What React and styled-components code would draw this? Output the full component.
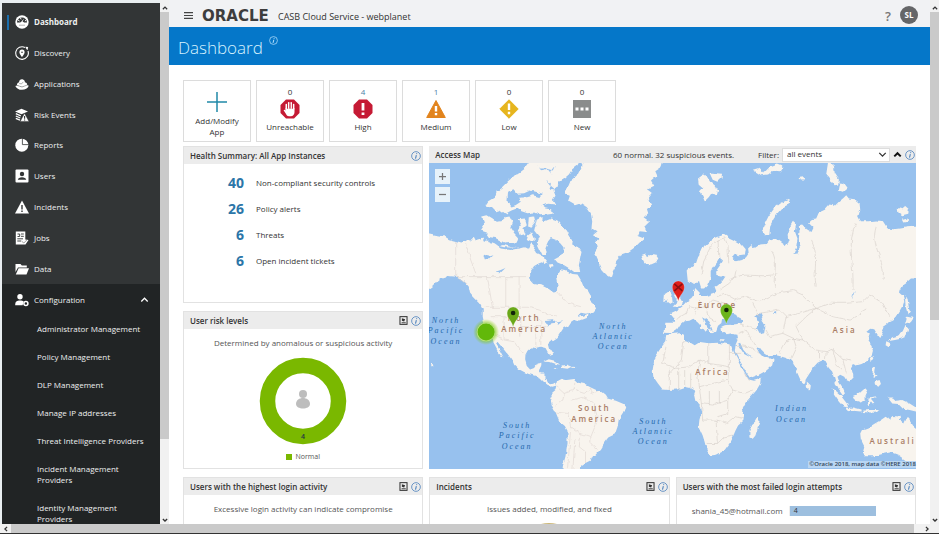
import React from "react";
import styled, { createGlobalStyle, css } from "styled-components";

const Global = createGlobalStyle`
  * { box-sizing: border-box; }
  body { margin: 0; background: #fff; color: #333; font-family: "Open Sans", "Noto Sans", sans-serif; font-size: 8px; line-height: 12px; }
  button, select { font: inherit; color: inherit; }
  ul, h1, h2, p, dl, dd { margin: 0; padding: 0; }
  ul { list-style: none; }
  a { color: inherit; text-decoration: none; }
  svg { display: block; }
`;

/* ---------- frame ---------- */
const Frame = styled.div`
  height: 100vh;
  display: grid;
  grid-template-rows: minmax(0, 1fr) 9px;
  border-bottom: 1px solid #333;
  overflow: hidden;
`;
const Body = styled.div`
  display: grid;
  grid-template-columns: 158px 9px minmax(0, 1fr) 9px;
  padding-left: 2px;
  background: #e9eef1;
  min-height: 0;
`;
const Track = styled.div`
  display: flex;
  flex-direction: column;
  justify-content: space-between;
  background: #f1f1f1;
  padding-top: 3px;
  min-height: 0;
`;
const Thumb = styled.div`
  height: ${(p) => p.$size};
  background: #cacaca;
`;
const Fill = styled.div`
  flex: 1;
`;
const Arrow = styled.button`
  width: 9px;
  height: 9px;
  padding: 0;
  border: 0;
  display: grid;
  place-items: center;
  background: #f1f1f1;
`;
const BottomTrack = styled.div`
  display: flex;
  background: #cacaca;
  justify-content: space-between;
  & > :first-child { width: 11px; }
  & > :last-child { width: 25px; }
`;

/* ---------- sidebar ---------- */
const Sidebar = styled.nav`
  margin-top: 3px;
  background: #323536;
  color: #eef0f0;
  overflow: hidden;
`;
const NavList = styled.ul`
  display: grid;
  grid-template-rows: repeat(9, 1fr);
  height: 281px;
  padding-top: 4px;
`;
const rowStyle = css`
  display: grid;
  grid-template-columns: 14px 1fr auto;
  column-gap: 5px;
  align-items: center;
  width: 100%;
  padding: 0 11px 0 13px;
`;
const NavLink = styled.a`
  ${rowStyle}
  position: relative;
  height: 100%;
  font-weight: ${(p) => (p.$active ? 700 : 400)};
  &::before {
    content: "";
    position: absolute;
    left: 5px;
    top: 8px;
    bottom: 8px;
    width: 2px;
    background: ${(p) => (p.$active ? "#1b6fae" : "transparent")};
  }
`;
const ConfigArea = styled.div`
  background: #212425;
  min-height: 100%;
`;
const ConfigButton = styled.button`
  ${rowStyle}
  height: 31px;
  border: 0;
  background: none;
  text-align: left;
`;
const SubList = styled.ul`
  padding-left: 35px;
  padding-right: 10px;
`;
const SubItem = styled.li`
  max-width: ${(p) => (p.$wrap ? "90px" : "none")};
  padding: 8px 0 9px;
  line-height: 11px;
`;

/* ---------- header ---------- */
const Main = styled.main`
  background: #fff;
  overflow: hidden;
  display: flex;
  flex-direction: column;
`;
const TopBar = styled.header`
  flex: none;
  display: flex;
  align-items: center;
  height: 27px;
  padding: 4px 12px 0 15px;
  background: #f1f2f4;
`;
const IconButton = styled.button`
  display: grid;
  place-items: center;
  border: 0;
  padding: 0;
  background: none;
`;
const Brand = styled.span`
  margin-left: 9px;
  width: 76px;
  font: 700 15px/18px "DejaVu Sans", sans-serif;
  color: #3d3d3d;
  white-space: nowrap;
`;
const Service = styled.span`
  flex: 1;
  font-size: 9px;
  padding-top: 2px;
`;
const Help = styled(IconButton)`
  font-size: 13px;
  font-weight: 600;
  color: #777;
  width: 12px;
`;
const Avatar = styled.button`
  margin-left: 6px;
  margin-bottom: 2px;
  width: 18px;
  height: 18px;
  padding: 0;
  border: 0;
  border-radius: 50%;
  background: #656668;
  color: #fff;
  font-size: 8px;
  font-weight: 700;
`;
const Banner = styled.div`
  flex: none;
  display: flex;
  align-items: center;
  gap: 6px;
  height: 38px;
  padding-left: 9px;
  background: #0577c9;
  color: #d8f3ff;
  & > button { margin-bottom: 12px; }
`;
const Title = styled.h1`
  font-size: 17px;
  line-height: 24px;
  font-weight: 300;
  padding-top: 3px;
`;

/* ---------- tiles ---------- */
const Content = styled.div`
  padding: 15px 14px 0;
`;
const Tiles = styled.div`
  display: flex;
  gap: 5px;
  margin-bottom: 4px;
`;
const Tile = styled.button`
  display: flex;
  flex-direction: column;
  align-items: center;
  width: 68px;
  height: 62px;
  padding: ${(p) => (p.$add ? "10px 8px 0" : "5px 0 0")};
  border: 1px solid #dcdcdc;
  background: #fff;
  line-height: 11px;
  & > svg { margin-bottom: 2px; }
`;
const Count = styled.span`
  margin-bottom: 2px;
  color: ${(p) => (p.$link ? "#4c82a8" : "#333")};
`;

/* ---------- panels ---------- */
const Grid = styled.div`
  display: grid;
  grid-template-columns: repeat(3, minmax(0, 1fr));
  grid-template-rows: 157px 158px auto;
  gap: 8px 6px;
`;
const Panel = styled.section`
  display: flex;
  flex-direction: column;
  border: 1px solid #e2e2e2;
  background: #fff;
  min-width: 0;
  ${(p) => p.$wide && "grid-column: 2 / 4; grid-row: 1 / 3; border: 0;"}
`;
const PanelHead = styled.div`
  flex: none;
  display: flex;
  align-items: center;
  gap: 3px;
  height: 17px;
  padding: 0 1px 0 6px;
  background: #ececec;
`;
const PanelTitle = styled.h2`
  flex: 1;
  font-size: 8px;
  line-height: 12px;
  font-weight: 600;
  white-space: nowrap;
`;
const Summary = styled.dl`
  display: grid;
  grid-template-columns: 60px 1fr;
  grid-auto-rows: 26px;
  column-gap: 12px;
  align-items: center;
  padding-top: 6px;
`;
const Figure = styled.dt`
  text-align: right;
  font-size: 14px;
  font-weight: 700;
  color: #2c76a8;
`;
const Note = styled.p`
  padding: 8px 0;
  text-align: center;
  font-size: 8px;
  line-height: 12px;
  color: #555;
`;
const Center = styled.div`
  display: flex;
  flex-direction: column;
  align-items: center;
  gap: 6px;
`;
const Legend = styled.div`
  display: flex;
  align-items: center;
  gap: 3px;
  font-size: 7px;
  color: #555;
  &::before { content: ""; width: 6px; height: 6px; background: #7ab800; }
`;
const MapNote = styled.span`
  margin-right: 21px;
  font-size: 8px;
`;
const Select = styled.select`
  width: 108px;
  height: 14px;
  padding: 0 4px 3px;
  appearance: none;
  border: 1px solid #ddd;
  background: #fff;
  line-height: 9px;
`;
const SelectWrap = styled.span`
  display: grid;
  align-items: center;
  & > * { grid-area: 1 / 1; }
  & > svg { justify-self: end; margin-right: 3px; pointer-events: none; }
`;
const MapBox = styled.div`
  flex: 1;
  position: relative;
  min-height: 0;
  & > svg { width: 100%; height: 100%; }
`;
const Zoom = styled.div`
  position: absolute;
  left: 6px;
  top: 6px;
  display: grid;
  gap: 3px;
`;
const ZoomButton = styled.button`
  width: 15px;
  height: 15px;
  padding: 0;
  border: 0;
  background: #e6f2fa;
  color: #666;
  display: grid;
  place-items: center;
`;
const Credit = styled.small`
  position: absolute;
  right: 0;
  bottom: 1px;
  padding-left: 1px;
  background: #b9d6f3;
  color: #33475b;
  font-size: 6px;
  line-height: 7px;
  font-weight: 600;
`;
const BarRow = styled.div`
  display: grid;
  grid-template-columns: 106px 1fr;
  column-gap: 6px;
  align-items: center;
  padding-top: 10px;
  font-size: 8px;
  & > :first-child { text-align: right; color: #555; }
`;
const BarArea = styled.div`
  border-left: 1px solid #eee;
`;
const Bar = styled.div`
  width: 69%;
  height: 10px;
  padding-left: 4px;
  background: #9dbfdf;
  font-size: 7px;
  line-height: 10px;
`;

/* ---------- icons ---------- */
const Svg = ({ s = 14, children, ...r }) => (
  <svg width={s} height={s} viewBox="0 0 14 14" fill="none" aria-hidden="true" {...r}>{children}</svg>
);
const W = "#fff";
const D = "#323536";
const navIcons = {
  Dashboard: (
    <Svg><circle cx="7" cy="7" r="6.7" fill={W} /><path d="M2 7.6a5 5 0 0 1 10 0H9.2L7.6 6.4 9.3 3.3 6 6.9l-1 .7z" fill={D} /><path d="M3 5l1.6 1M5.4 2.8l.7 1.6M11.2 5.2l-1.3.8" stroke={W} /><path d="M4 10.2h6" stroke="#aaa" strokeWidth=".9" /></Svg>
  ),
  Discovery: (
    <Svg><path d="M10 1.5A6.3 6.3 0 1 0 13 5" stroke={W} strokeWidth="1.1" /><path d="M10.3.8l2.8.3-.4 2.9-1.2-.7z" fill={W} /><path d="M7 3.6a2.6 2.6 0 0 0-2.6 2.6C4.400 8 7 11 7 11s2.600-3 2.600-4.800A2.600 2.600 0 0 0 7 3.600z" fill={W} /><circle cx="7" cy="6.2" r=".8" fill={D} /></Svg>
  ),
  Applications: (
    <Svg><path d="M2 8.3C1.600 6 3.500 5.500 4 5.500 4.200 3 6 1.800 8 2.500c1.200.4 1.900 1.600 1.900 2.700C12 5.400 12.500 7 12 8.400L7 10z" fill={W} /><path d="M.3 8.900l2.200-.7L7 9.700l4.800-1.800 2 .9c-1 2.600-3.600 4-6.800 4S1.300 11.300.3 8.900z" fill={W} /><path d="M1.800 8.300L7 10l5-1.900M4.200 6.500l2.300.4 1.800-2" stroke={D} strokeWidth=".4" /></Svg>
  ),
  "Risk Events": (
    <Svg><path d="M6.500.8L13 3.500 6.500 6.200 0 3.500z" fill={W} /><path d="M.8 5.700l5 2.200M.8 8l4.500 2M.8 10.300l4.200 1.900" stroke={W} strokeWidth="1.300" /><path d="M9.500 5.200L14 13.400H5.200z" fill={W} stroke={D} strokeWidth=".5" /><path d="M9.600 8v2.700M9.600 11.400v1" stroke={D} strokeWidth="1.100" /></Svg>
  ),
  Reports: (
    <Svg><circle cx="6.800" cy="7.200" r="6.500" fill={W} /><path d="M7.400.5v6.100h6.100" stroke={D} strokeWidth=".8" /></Svg>
  ),
  Users: (
    <Svg><rect x=".5" y=".5" width="13" height="13" rx="1" fill={W} /><circle cx="7" cy="5" r="2.200" fill={D} /><path d="M2.800 10.800c0-3.500 8.400-3.500 8.400 0z" fill={D} /></Svg>
  ),
  Incidents: (
    <Svg><path d="M7 .5L14 13.500H0z" fill={W} /><path d="M7 5v4.400M7 10.600v1.500" stroke={D} strokeWidth="1.400" /></Svg>
  ),
  Jobs: (
    <Svg><path d="M.8.5h9.500v8l3.200.5-3 4.500H.8z" fill={W} /><path d="M2.500 3h2.200v2.500H2.500M6 3h2.800M6 5.300h2.800M2.300 7.800H8M2.300 10h4" stroke={D} strokeWidth=".9" /><path d="M7 10.500l1.800 1.500 3.300-3.300" stroke="#888" strokeWidth=".8" /></Svg>
  ),
  Data: (
    <Svg><path d="M.5 2h5l1.300 1.500h5v2H3L.5 10z" fill={W} /><path d="M3.600 6.300H14L11.500 12.500H.8z" fill={W} /></Svg>
  ),
};
const ConfigIcon = () => (
  <Svg><circle cx="5" cy="3.700" r="2.700" fill={W} /><path d="M.2 12.300C0 8.500 2 7.500 5 7.500c1.500 0 2.800.3 3.700 1L7.600 12.300z" fill={W} /><circle cx="10.900" cy="10.600" r="2" stroke={W} strokeWidth="1.500" /></Svg>
);
const Info = ({ color = "#4a80bd", s = 10 }) => (
  <Svg s={s}><circle cx="7" cy="7" r="6.100" stroke={color} strokeWidth="1.100" /><path d="M7.500 5.800L6.300 10.700M8 3.200l-.2 1.200" stroke={color} strokeWidth="1.500" /></Svg>
);
const Export = () => (
  <Svg s={9}><rect x="1.500" y="1" width="11" height="12" stroke="#333" strokeWidth="1.600" /><path d="M4 10.500h6.500" stroke="#333" strokeWidth="1.400" /><path d="M4.500 3.500l5 1.500-1.500 3.500-3.500-1z" fill="#333" /></Svg>
);
const Chevron = ({ up, s = 9, color = "#333", w = 2 }) => (
  <Svg s={s}><path d={up ? "M2 10l5-5 5 5" : "M2 4.500l5 5 5-5"} stroke={color} strokeWidth={w} /></Svg>
);
const InfoButton = (p) => <IconButton aria-label="Information"><Info {...p} /></IconButton>;
const ExportButton = () => <IconButton aria-label="Export"><Export /></IconButton>;

const octagon = "M6 .5h8L19.500 6v8L14 19.500H6L.5 14V6z";
const Big = ({ children }) => <svg width="20" height="20" viewBox="0 0 20 20" aria-hidden="true">{children}</svg>;
const bang = <path d="M10 4v7.500M10 13.500v2.500" stroke="#fff" strokeWidth="2.800" />;
const tiles = [
  { n: 0, label: "Unreachable", icon: <Big><path d={octagon} fill="#c51a34" /><path d="M6.300 10V5.500M8.700 9V3.700M11.200 9V3.700M13.600 10V5.500" stroke="#fff" strokeWidth="1.600" strokeLinecap="round" /><path d="M5.500 9.200h9v4c0 2-1.500 4-3.600 4H9c-1.500 0-2.300-1-3-2.300L3.600 11.300c.4-.9 1.300-.7 1.900.1z" fill="#fff" /><path d="M7.500 5v5M10 4.500V10M12.400 5v5" stroke="#c51a34" strokeWidth=".6" /></Big> },
  { n: 4, link: true, label: "High", icon: <Big><path d={octagon} fill="#c51a34" />{bang}</Big> },
  { n: 1, link: true, label: "Medium", icon: <Big><path d="M10 1.500L19.300 18.500H.7z" fill="#e2841d" stroke="#e2841d" strokeLinejoin="round" /><path d="M10 7v5.500M10 14v2.300" stroke="#fff" strokeWidth="2.400" /></Big> },
  { n: 0, label: "Low", icon: <Big><path d="M10 .8L19.200 10 10 19.200.8 10z" fill="#e6b51e" stroke="#e6b51e" strokeLinejoin="round" /><path d="M10 4.500v6.500M10 12.800v2.400" stroke="#fff" strokeWidth="2.400" /></Big> },
  { n: 0, label: "New", icon: <Big><path d="M1 1h18v18H1z" fill="#8a8c8c" /><path d="M3.500 8.500h3v3h-3zM8.500 8.500h3v3h-3zM13.500 8.500h3v3h-3z" fill="#fff" /></Big> },
];

/* ---------- world map ---------- */
const westLand = [
  "M10 219L40 226 62 230 75 238 95 243 112 248 125 243 133 238 140 245 150 232 156 243 166 240 175 236 180 246 190 238 198 250 210 252 222 260 240 255 262 262 285 266 300 262 312 268 322 250 334 262 330 276 345 284 360 292 362 304 345 310 330 318 318 335 318 358 330 372 352 376 375 388 388 398 398 396 400 375 396 352 402 340 408 330 425 333 445 342 460 344 470 360 478 380 492 394 500 408 497 420 510 432 516 448 508 458 490 462 470 458 458 470 476 468 490 462 488 474 466 482 452 478 440 486 432 498 418 504 408 520 400 532 388 540 374 553 378 568 386 580 380 588 372 578 364 564 348 560 334 564 322 562 310 572 304 584 303 600 308 618 318 628 330 624 338 610 352 608 350 620 342 632 350 640 364 640 364 655 372 668 384 672 396 668 398 676 384 680 370 674 358 664 346 652 330 646 314 642 300 636 282 626 270 614 264 600 248 580 234 562 220 545 216 552 228 572 238 592 232 590 220 572 208 550 206 532 203 515 190 500 180 488 176 470 176 446 168 430 150 412 138 398 134 380 122 366 108 354 90 350 70 348 52 354 40 364 30 376 10 392Z",
  "M398 674L402 662 415 655 428 660 450 657 462 668 480 672 500 682 516 690 530 692 545 704 552 716 575 722 598 732 603 742 596 758 584 776 580 800 572 822 552 832 540 848 528 868 516 882 505 890 500 902 484 910 472 918 466 935 414 935 418 910 424 888 430 850 430 812 422 798 406 784 394 756 384 738 380 722 386 708 384 698 394 690Z",
  "M480 5L470 25 460 45 444 58 436 78 420 92 424 104 440 108 434 126 452 136 470 130 488 142 500 160 504 185 502 204 520 214 506 226 524 236 512 248 522 260 512 275 518 292 526 310 534 330 546 344 560 352 566 334 574 318 576 300 590 284 612 276 632 262 650 244 660 236 640 228 646 214 668 216 660 198 674 184 658 172 672 160 668 148 682 132 670 118 684 100 668 88 690 78 680 62 696 48 690 34 712 20 716 5Z",
  "M320 5L308 22 290 36 268 50 250 66 236 80 218 94 212 112 192 124 184 136 200 144 214 158 232 152 244 162 262 152 278 146 292 154 310 160 330 158 348 166 370 164 386 162 384 148 364 146 352 136 372 132 394 134 386 120 394 108 388 92 400 82 404 66 420 56 434 44 444 28 460 16 466 5Z",
  "M175 170L190 166 206 176 218 186 232 184 244 172 256 170 264 186 258 204 270 222 282 236 276 248 256 246 240 248 226 240 214 234 198 232 188 218 170 212 180 196Z",
  "M280 178L302 176 308 196 298 206 304 222 290 226 284 210 290 196Z M314 172L330 170 334 188 322 204 312 200Z M312 226L324 218 332 236 320 246 308 240Z",
  "M338 180L352 172 362 184 382 176 400 182 412 196 428 212 438 230 446 240 444 254 462 262 472 276 468 296 464 316 468 336 450 336 436 326 420 316 400 308 390 296 404 288 418 280 418 262 408 250 396 240 380 234 372 244 364 262 368 282 352 282 344 266 340 248 346 232 330 212Z",
  "M352 302L362 298 370 310 358 316Z M374 314l12-2 2 10-12 2Z",
  "M652 288L664 284 668 292 680 282 694 284 702 296 694 308 680 314 666 312 658 304Z",
  "M358 605L374 598 392 602 408 614 396 612 378 606Z M412 616L428 614 442 620 430 626 414 624Z M445 620l8 1-1 3-8-1Z M390 622l10 2-3 3-8-2Z",
  "M722 402l12-8 8 10-4 16-18 2Z M20 612l6 0 2 5-5 2Z",
];
const eastLand = [
  "M55 332L66 318 80 310 86 292 96 276 104 258 118 246 132 236 146 230 162 224 178 234 194 242 214 254 226 268 224 284 208 286 196 282 188 290 202 304 218 300 230 292 238 280 236 266 246 256 256 264 272 254 292 252 300 242 320 238 336 250 348 258 358 246 354 222 360 204 370 186 380 194 376 214 384 236 380 262 372 282 384 280 396 258 388 238 390 214 388 196 398 194 412 208 426 216 432 204 416 188 426 178 440 176 448 158 466 150 480 134 496 138 508 126 520 116 530 106 538 116 556 118 570 130 572 150 566 170 574 184 600 184 620 182 640 184 654 206 672 208 690 206 712 202 745 200 745 356 724 356 712 366 698 376 690 390 688 398 700 408 704 424 698 442 690 456 680 472 672 478 660 484 652 492 640 500 634 508 640 520 632 534 624 524 614 508 602 506 590 516 604 522 600 534 596 546 606 558 610 572 606 588 594 602 576 612 560 616 550 612 544 622 550 640 552 652 540 664 530 660 524 650 512 644 504 650 510 668 518 680 526 700 520 706 508 690 500 674 494 652 488 634 478 624 468 606 456 602 444 608 430 624 420 640 410 656 406 672 394 662 386 644 378 626 372 608 364 600 350 594 330 588 312 584 300 586 288 578 276 566 260 562 270 580 280 590 296 592 312 600 308 616 290 632 268 644 242 654 232 640 220 618 208 596 196 574 198 556 206 536 204 524 190 522 172 526 158 516 156 500 166 496 184 494 204 492 214 482 200 478 186 468 170 472 158 480 156 492 146 500 140 516 130 512 124 496 116 484 106 476 98 472 108 492 120 506 110 516 100 504 86 488 72 476 60 482 46 484 34 494 24 510 10 520 -14 518 -12 488 18 488 14 472 4 460 20 452 38 440 52 424 66 414 74 404 74 392 80 384 90 394 92 408 112 408 132 402 142 396 136 382 146 376 160 362 168 350 152 350 140 344 142 330 152 316 160 304 150 296 144 306 134 320 124 336 124 354 116 374 104 386 92 386 86 366 74 372 58 362Z",
  "M-10 526L10 522 34 520 44 524 44 540 60 546 76 556 92 546 118 550 146 548 176 552 186 556 192 574 204 596 216 620 226 638 238 658 254 662 274 656 272 672 260 692 244 710 228 728 220 744 224 764 222 782 206 796 198 812 192 826 180 850 164 872 142 884 122 886 112 870 106 846 100 826 88 800 90 780 96 758 92 738 78 722 74 704 78 692 64 684 46 680 22 688 0 690 -20 688 -34 670 -48 650 -50 630 -46 606 -40 586 -24 562 -12 546Z",
  "M264 772L270 784 266 800 258 826 250 836 240 832 240 814 248 792 256 786Z",
  "M10 440L20 430 22 416 14 402 24 396 30 410 40 428 36 438 22 440Z M-4 416L8 410 10 428 0 434-8 428Z",
  "M86 56L102 44 114 52 122 66 136 76 146 92 142 108 128 98 118 112 106 124 100 110 92 94 102 84 88 72Z M120 38L140 40 158 42 156 54 144 66 130 60Z",
  "M250 30L270 24 284 38 300 22 322 14 342 22 334 34 312 32 296 44 276 46Z M390 54l12-2 2 10-10 0Z",
  "M476 5L492 16 496 38 508 56 506 74 492 76 482 60 470 44Z M512 68L524 70 534 84 520 96 508 92Z",
  "M356 120L362 132 340 142 324 160 312 178 302 198 300 222 288 226 278 212 286 192 298 168 314 146 334 130Z",
  "M684 144L700 148 706 138 718 148 716 162 698 166 686 158Z M700 180l14-4 2 10-12 2Z",
  "M706 408L714 420 718 444 724 456 714 460 708 440Z M712 470L732 474 724 486 706 492Z M708 494L716 508 708 530 694 536 676 540 654 544 668 532 690 526 700 512Z M650 544L660 548 658 562 648 556Z",
  "M604 594l8-6 2 12-8 6Z M606 622L616 620 614 638 624 648 616 650 606 638Z M614 668L630 660 634 672 624 682Z",
  "M412 664L424 676 422 688 412 682Z",
  "M486 684L500 696 518 712 532 730 536 742 522 738 508 722 494 702Z M532 744L552 742 576 748 576 754 554 752 534 750Z M580 752l20-2 30 0-16 8-34-2Z",
  "M550 708L566 700 584 684 596 690 588 706 588 720 574 730 558 724Z M598 712L620 708 604 716 614 728 610 734 602 724 600 738 594 730Z",
  "M654 712L670 712 680 722 698 720 720 730 745 746 745 756 720 750 700 746 686 732 668 730Z",
  "M572 820L578 808 600 800 616 790 634 780 648 770 660 778 672 768 690 770 692 782 704 790 714 768 722 782 730 796 745 808 745 910 720 908 702 896 684 884 664 876 636 882 612 888 590 888 580 874 584 858 574 838Z",
  "M120 510l12 2-6 8-8-4Z M92 494l6 0 0 14-6-2Z M150 538l16 0-4 5-10-2Z M200 536l12-4-6 8Z",
];
const water = [
  "M252 96L268 88 280 102 300 100 318 92 340 98 356 102 348 112 326 106 306 112 282 114 290 126 274 136 262 140 250 124Z",
  "M338 10L352 34 372 30 386 48 378 36 392 18 386 32 366 26 348 26Z M366 60L380 70 376 86 394 90 380 78Z",
  "M178 284L196 290 208 286 196 298 182 298Z M212 336L230 330 244 324 228 340Z",
  "M216 256L240 262 290 264 260 270 230 266Z M266 180L280 190 280 218 270 210Z",
  "M360 480L386 478 398 488 382 490 374 500 368 490Z M396 488l18-4-12 10Z",
];
const eastWater = [
  "M258 466L276 458 282 472 276 482 288 498 284 520 272 522 262 504 266 488Z",
  "M166 478L178 460 200 464 206 474 222 482 216 490 190 488 170 494Z",
  "M548 416L556 392 550 402Z M310 460l10-4 0 10Z",
  "M204 552L212 548 222 570 236 586 252 594 240 590 224 582Z",
];
const borders = [
  "M95 243V348L130 372M95 350H318M180 442H312L345 450 372 465 400 468M125 250L140 300 155 340M190 350L205 442M245 350V442M285 350V440M400 395L430 430 470 440",
  "M205 520L240 540 270 545 290 575 304 582M200 470H290V530M240 470V540M335 500V560M290 500H370M350 480V555",
  "M398 680L420 700 416 720 394 738M420 700L450 690 452 665M450 690L480 700 500 684M500 684V700L525 692M394 756L430 760 440 800 470 820 500 830 500 850 520 868M440 800L436 850 430 930M470 820L465 860 484 875 484 910M452 840L446 930",
  "M440 720L475 712 510 730 520 780 500 830",
];
const eastBorders = [
  "M95 345L104 300 124 260 146 240 148 290M146 240L166 234 176 260 178 310M150 390L180 370 196 350 200 330M165 400L200 420 230 410 270 425 320 400 370 392 400 405 440 445 480 430 530 430 580 425 600 405 640 430 660 470",
  "M250 430L270 470M270 460L330 450 350 470 390 460 440 445M350 470L340 520 300 530 290 510M340 520L372 535 400 540 440 570 470 575 490 568 520 595 545 600M330 580L350 545 380 535M400 540L380 500 410 470 440 445 490 470 540 480 590 450",
  "M450 570V595M470 575L468 600M490 568L500 610 520 630M520 595L530 640M372 535L380 560 364 595M205 490L240 500 262 505M205 520L230 510 262 562M200 556L240 560 270 580",
  "M44 540L36 600 0 640M118 550V610L180 620V552M118 610L92 600 60 620 20 625 -20 610 -10 560M180 580H215M92 600L84 640 90 680 130 670 175 660 180 620M175 660L190 690 226 700 250 690M226 640L240 662",
  "M90 680L96 730 130 735 175 720 190 690M96 730L100 780H140L144 850M140 780L175 790 198 770 222 775M175 720V760L144 770M112 850L144 850 165 830 192 825M120 690V735M150 690V730M0 620V690M28 625V688M46 630V680M64 640V684",
  "M25 475L50 460 60 440 80 445 75 470M80 445L110 440 130 420 165 430 165 460M110 440L115 470 140 485M90 420L95 440M165 400L140 410",
  "M315 380C310 340 330 310 305 270M440 380C430 330 450 290 425 240M550 390C555 320 530 250 560 190M620 200C600 260 650 300 640 360M180 360C220 330 270 360 330 340",
];

const MapLabel = styled.text`
  font-family: "Open Sans", sans-serif;
  font-size: 8px;
  font-weight: 600;
  letter-spacing: 2px;
  text-anchor: middle;
  fill: #a97c64;
`;
const OceanLabel = styled(MapLabel)`
  font-family: "Liberation Serif", serif;
  font-size: 8px;
  font-style: italic;
  font-weight: 400;
  fill: #2468ac;
`;
const lands = [[95, 158, "North"], [95, 169, "America"], [288, 145, "Europe"], [415, 170, "Asia"], [283, 212, "Africa"], [165, 248, "South"], [165, 259, "America"], [463, 281, "Australi"]];
const oceans = [[17, 160, "North"], [17, 170, "Pacific"], [17, 181, "Ocean"], [184, 166, "North"], [184, 176, "Atlantic"], [184, 186, "Ocean"], [88, 265, "South"], [88, 275, "Pacific"], [88, 286, "Ocean"], [224, 261, "South"], [224, 271, "Atlantic"], [224, 281, "Ocean"], [362, 248, "Indian"], [362, 259, "Ocean"]];

const Pin = ({ x, y, color, cross }) => (
  <g transform={`translate(${x} ${y})`}>
    <path d="M0 0C-1-6-6-8-6-14a6 6 0 0 1 12 0C6-8 1-6 0 0z" fill={color} stroke="#fff" strokeOpacity=".4" strokeWidth=".5" />
    {cross ? <path d="M-4-17L4-10M4-17L-4-10" stroke="#8d1010" strokeWidth="1.600" /> : <circle cy="-14" r="2.300" fill="#12240a" />}
  </g>
);

const WorldMap = () => (
  <svg viewBox="0 0 486 306" preserveAspectRatio="xMidYMid slice" role="img" aria-label="World map of access events">
    <defs>
      <filter id="coast" x="0" y="0" width="100%" height="100%">
        <feTurbulence type="fractalNoise" baseFrequency=".16" numOctaves="2" seed="4" />
        <feDisplacementMap in="SourceGraphic" scale="4" xChannelSelector="R" yChannelSelector="G" />
      </filter>
      <radialGradient id="glow"><stop offset=".6" stopColor="#6cc000" stopOpacity=".7" /><stop offset="1" stopColor="#8cd000" stopOpacity="0" /></radialGradient>
    </defs>
    <path d="M0 0h486v306H0z" fill="#97c1ee" />
    <g filter="url(#coast)">
      <path d="M-20-20h530v350H-20z" fill="#97c1ee" />
      <g transform="translate(-5 -3) scale(.3333)">
        <path d={westLand.join("")} fill="#f8f4ee" />
        <path d={water.join("")} fill="#97c1ee" />
        <path d={borders.join("")} fill="none" stroke="#d8cfcb" strokeWidth="1.500" />
      </g>
      <g transform="translate(240 -3) scale(.3333)">
        <path d={eastLand.join("")} fill="#f8f4ee" />
        <path d={eastWater.join("")} fill="#97c1ee" />
        <path d={eastBorders.join("")} fill="none" stroke="#d3cbc6" strokeWidth="1.700" />
      </g>
    </g>
    {oceans.map(([x, y, t]) => <OceanLabel key={t + x + y} x={x} y={y}>{t}</OceanLabel>)}
    {lands.map(([x, y, t]) => <MapLabel key={t + x + y} x={x} y={y}>{t}</MapLabel>)}
    <circle cx="57" cy="169" r="13" fill="url(#glow)" />
    <circle cx="57" cy="169" r="9" fill="#62b80a" stroke="#b5df7f" strokeWidth="1" />
    <Pin x={84} y={164} color="#6aa818" />
    <Pin x={249} y={138} color="#e01f1a" cross />
    <Pin x={297} y={161} color="#6cb51c" />
  </svg>
);

const Head = ({ title, exportable, children }) => (
  <PanelHead>
    <PanelTitle>{title}</PanelTitle>
    {children}
    {exportable && <ExportButton />}
    <InfoButton />
  </PanelHead>
);

const VerticalScroll = ({ size }) => (
  <Track>
    <Arrow aria-label="Scroll up"><Chevron up s={6} w={3} /></Arrow>
    <Thumb $size={size} />
    <Fill />
    <Arrow aria-label="Scroll down"><Chevron s={6} w={3} /></Arrow>
  </Track>
);

const subItems = ["Administrator Management", "Policy Management", "DLP Management", "Manage IP addresses", "Threat Intelligence Providers", "Incident Management Providers", "Identity Management Providers"];
const health = [[40, "Non-compliant security controls"], [26, "Policy alerts"], [6, "Threats"], [6, "Open incident tickets"]];

export default function App() {
  return (
    <Frame>
      <Global />
      <Body>
        <Sidebar aria-label="Main">
          <NavList>
            {Object.entries(navIcons).map(([name, icon], i) => (
              <li key={name}><NavLink href="#" $active={i === 0}>{icon}<span>{name}</span></NavLink></li>
            ))}
          </NavList>
          <ConfigArea>
            <ConfigButton aria-expanded="true"><ConfigIcon /><span>Configuration</span><Chevron up color="#fff" /></ConfigButton>
            <SubList>
              {subItems.map((t, i) => <SubItem key={t} $wrap={i > 4}><a href="#">{t}</a></SubItem>)}
            </SubList>
          </ConfigArea>
        </Sidebar>
        <VerticalScroll size="82%" />
        <Main>
          <TopBar>
            <IconButton aria-label="Menu"><Svg s={9}><path d="M0 2.500h14M0 7h14M0 11.500h14" stroke="#444" strokeWidth="1.800" /></Svg></IconButton>
            <Brand>ORACLE</Brand>
            <Service>CASB Cloud Service - webplanet</Service>
            <Help aria-label="Help">?</Help>
            <Avatar>SL</Avatar>
          </TopBar>
          <Banner>
            <Title>Dashboard</Title>
            <InfoButton color="#bfe6ff" s={9} />
          </Banner>
          <Content>
            <Tiles>
              <Tile $add>
                <svg width="22" height="22" viewBox="0 0 22 22" aria-hidden="true"><path d="M11 1v20M1 11h20" stroke="#2089a8" strokeWidth="1.500" /></svg>
                Add/Modify App
              </Tile>
              {tiles.map((t) => (
                <Tile key={t.label}><Count $link={t.link}>{t.n}</Count>{t.icon}{t.label}</Tile>
              ))}
            </Tiles>
            <Grid>
              <Panel>
                <Head title="Health Summary: All App Instances" />
                <Summary>
                  {health.map(([n, t]) => <React.Fragment key={t}><Figure>{n}</Figure><dd>{t}</dd></React.Fragment>)}
                </Summary>
              </Panel>
              <Panel $wide>
                <Head title="Access Map">
                  <MapNote>60 normal. 32 suspicious events.</MapNote>
                  <label htmlFor="filter">Filter:</label>
                  <SelectWrap>
                    <Select id="filter" defaultValue="all"><option value="all">all events</option></Select>
                    <Chevron />
                  </SelectWrap>
                  <IconButton aria-label="Collapse"><Chevron up color="#111" w={3} /></IconButton>
                </Head>
                <MapBox>
                  <WorldMap />
                  <Zoom>
                    <ZoomButton aria-label="Zoom in"><Svg s={7}><path d="M7 0v14M0 7h14" stroke="#777" strokeWidth="2.500" /></Svg></ZoomButton>
                    <ZoomButton aria-label="Zoom out"><Svg s={7}><path d="M0 7h14" stroke="#777" strokeWidth="2.500" /></Svg></ZoomButton>
                  </Zoom>
                  <Credit>©Oracle 2018, map data ©HERE 2018</Credit>
                </MapBox>
              </Panel>
              <Panel>
                <Head title="User risk levels" exportable />
                <Note>Determined by anomalous or suspicious activity</Note>
                <Center>
                  <svg width="88" height="88" viewBox="0 0 88 88" role="img" aria-label="4 normal users">
                    <circle cx="44" cy="44" r="35.500" fill="none" stroke="#7ab800" strokeWidth="15.500" />
                    <circle cx="44" cy="37" r="4" fill="#bdbdbd" />
                    <path d="M37 47c0-8 14-8 14 0 0 6-14 6-14 0z" fill="#bdbdbd" />
                    <text x="44" y="82" textAnchor="middle" fontSize="7" fontWeight="600" fill="#234">4</text>
                  </svg>
                  <Legend>Normal</Legend>
                </Center>
              </Panel>
              <Panel>
                <Head title="Users with the highest login activity" exportable />
                <Note>Excessive login activity can indicate compromise</Note>
              </Panel>
              <Panel>
                <Head title="Incidents" exportable />
                <Note>Issues added, modified, and fixed</Note>
                <Center>
                  <svg width="60" height="60" viewBox="0 0 60 60" aria-hidden="true"><circle cx="30" cy="30" r="24" fill="none" stroke="#cdb878" strokeWidth="12" /></svg>
                </Center>
              </Panel>
              <Panel>
                <Head title="Users with the most failed login attempts" exportable />
                <BarRow><span>shania_45@hotmail.com</span><BarArea><Bar>4</Bar></BarArea></BarRow>
              </Panel>
            </Grid>
          </Content>
        </Main>
        <VerticalScroll size="308px" />
      </Body>
      <BottomTrack>
        <Arrow aria-label="Scroll left"><Svg s={6}><path d="M9.500 2l-5 5 5 5" stroke="#333" strokeWidth="3" /></Svg></Arrow>
        <Arrow aria-label="Scroll right"><Svg s={6}><path d="M4.500 2l5 5-5 5" stroke="#333" strokeWidth="3" /></Svg></Arrow>
      </BottomTrack>
    </Frame>
  );
}
